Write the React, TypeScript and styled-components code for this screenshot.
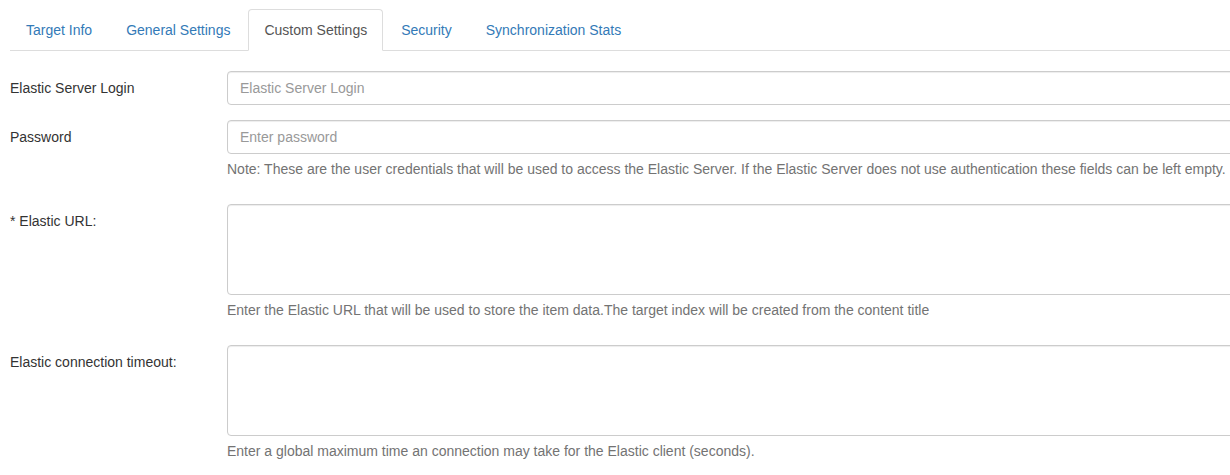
import React from 'react';
import styled, { createGlobalStyle } from 'styled-components';

const GlobalStyle = createGlobalStyle`
    html, body {
        margin: 0;
        padding: 0;
        background: #fff;
        overflow: hidden;
    }
    body {
        font-family: "Liberation Sans", Arial, Helvetica, sans-serif;
        font-size: 14px;
        line-height: 20px;
        color: #333;
    }
    * {
        box-sizing: border-box;
    }
`;

const Page = styled.div`
    width: 1260px;
    padding: 9px 0 0 10px;
`;

const Tabs = styled.ul`
    display: flex;
    list-style: none;
    margin: 0;
    padding: 0;
    border-bottom: 1px solid #ddd;
`;

const Tab = styled.li<{ $active?: boolean }>`
    margin: 0 2px -1px 0;
    padding: 10px 15px;
    border: 1px solid ${({ $active }) => ($active ? '#ddd' : 'transparent')};
    border-bottom-color: ${({ $active }) => ($active ? '#fff' : 'transparent')};
    border-radius: 4px 4px 0 0;
    background: ${({ $active }) => ($active ? '#fff' : 'transparent')};
    color: ${({ $active }) => ($active ? '#555' : '#337ab7')};
    cursor: ${({ $active }) => ($active ? 'default' : 'pointer')};
    white-space: nowrap;
`;

const Form = styled.form`
    display: grid;
    grid-template-columns: 217px 1fr;
    row-gap: 15px;
    padding-top: 20px;
`;

const Label = styled.label`
    padding-top: 7px;
    font-weight: normal;
`;

const Field = styled.div`
    display: flex;
    flex-direction: column;
`;

const Input = styled.input`
    height: 34px;
    padding: 6px 12px;
    border: 1px solid #ccc;
    border-radius: 4px;
    font: inherit;
    color: #555;
    box-shadow: inset 0 1px 1px rgba(0, 0, 0, 0.075);

    &::placeholder {
        color: #999;
    }
`;

const TextArea = styled.textarea`
    height: 91px;
    padding: 6px 12px;
    border: 1px solid #ccc;
    border-radius: 4px;
    font: inherit;
    color: #555;
    resize: none;
    box-shadow: inset 0 1px 1px rgba(0, 0, 0, 0.075);
`;

const Help = styled.span`
    display: block;
    margin: 5px 0 10px;
    color: #737373;
    white-space: nowrap;
`;

const tabs = ['Target Info', 'General Settings', 'Custom Settings', 'Security', 'Synchronization Stats'];

export default function App() {
    return (
        <>
            <GlobalStyle />
            <Page>
                <Tabs>
                    {tabs.map((t) => (
                        <Tab key={t} $active={t === 'Custom Settings'}>
                            {t}
                        </Tab>
                    ))}
                </Tabs>
                <Form>
                    <Label>Elastic Server Login</Label>
                    <Field>
                        <Input placeholder="Elastic Server Login" />
                    </Field>

                    <Label>Password</Label>
                    <Field>
                        <Input type="password" placeholder="Enter password" />
                        <Help>
                            Note: These are the user credentials that will be used to access the Elastic Server. If the
                            Elastic Server does not use authentication these fields can be left empty.
                        </Help>
                    </Field>

                    <Label>* Elastic URL:</Label>
                    <Field>
                        <TextArea />
                        <Help>
                            Enter the Elastic URL that will be used to store the item data.The target index will be
                            created from the content title
                        </Help>
                    </Field>

                    <Label>Elastic connection timeout:</Label>
                    <Field>
                        <TextArea />
                        <Help>Enter a global maximum time an connection may take for the Elastic client (seconds).</Help>
                    </Field>
                </Form>
            </Page>
        </>
    );
}
